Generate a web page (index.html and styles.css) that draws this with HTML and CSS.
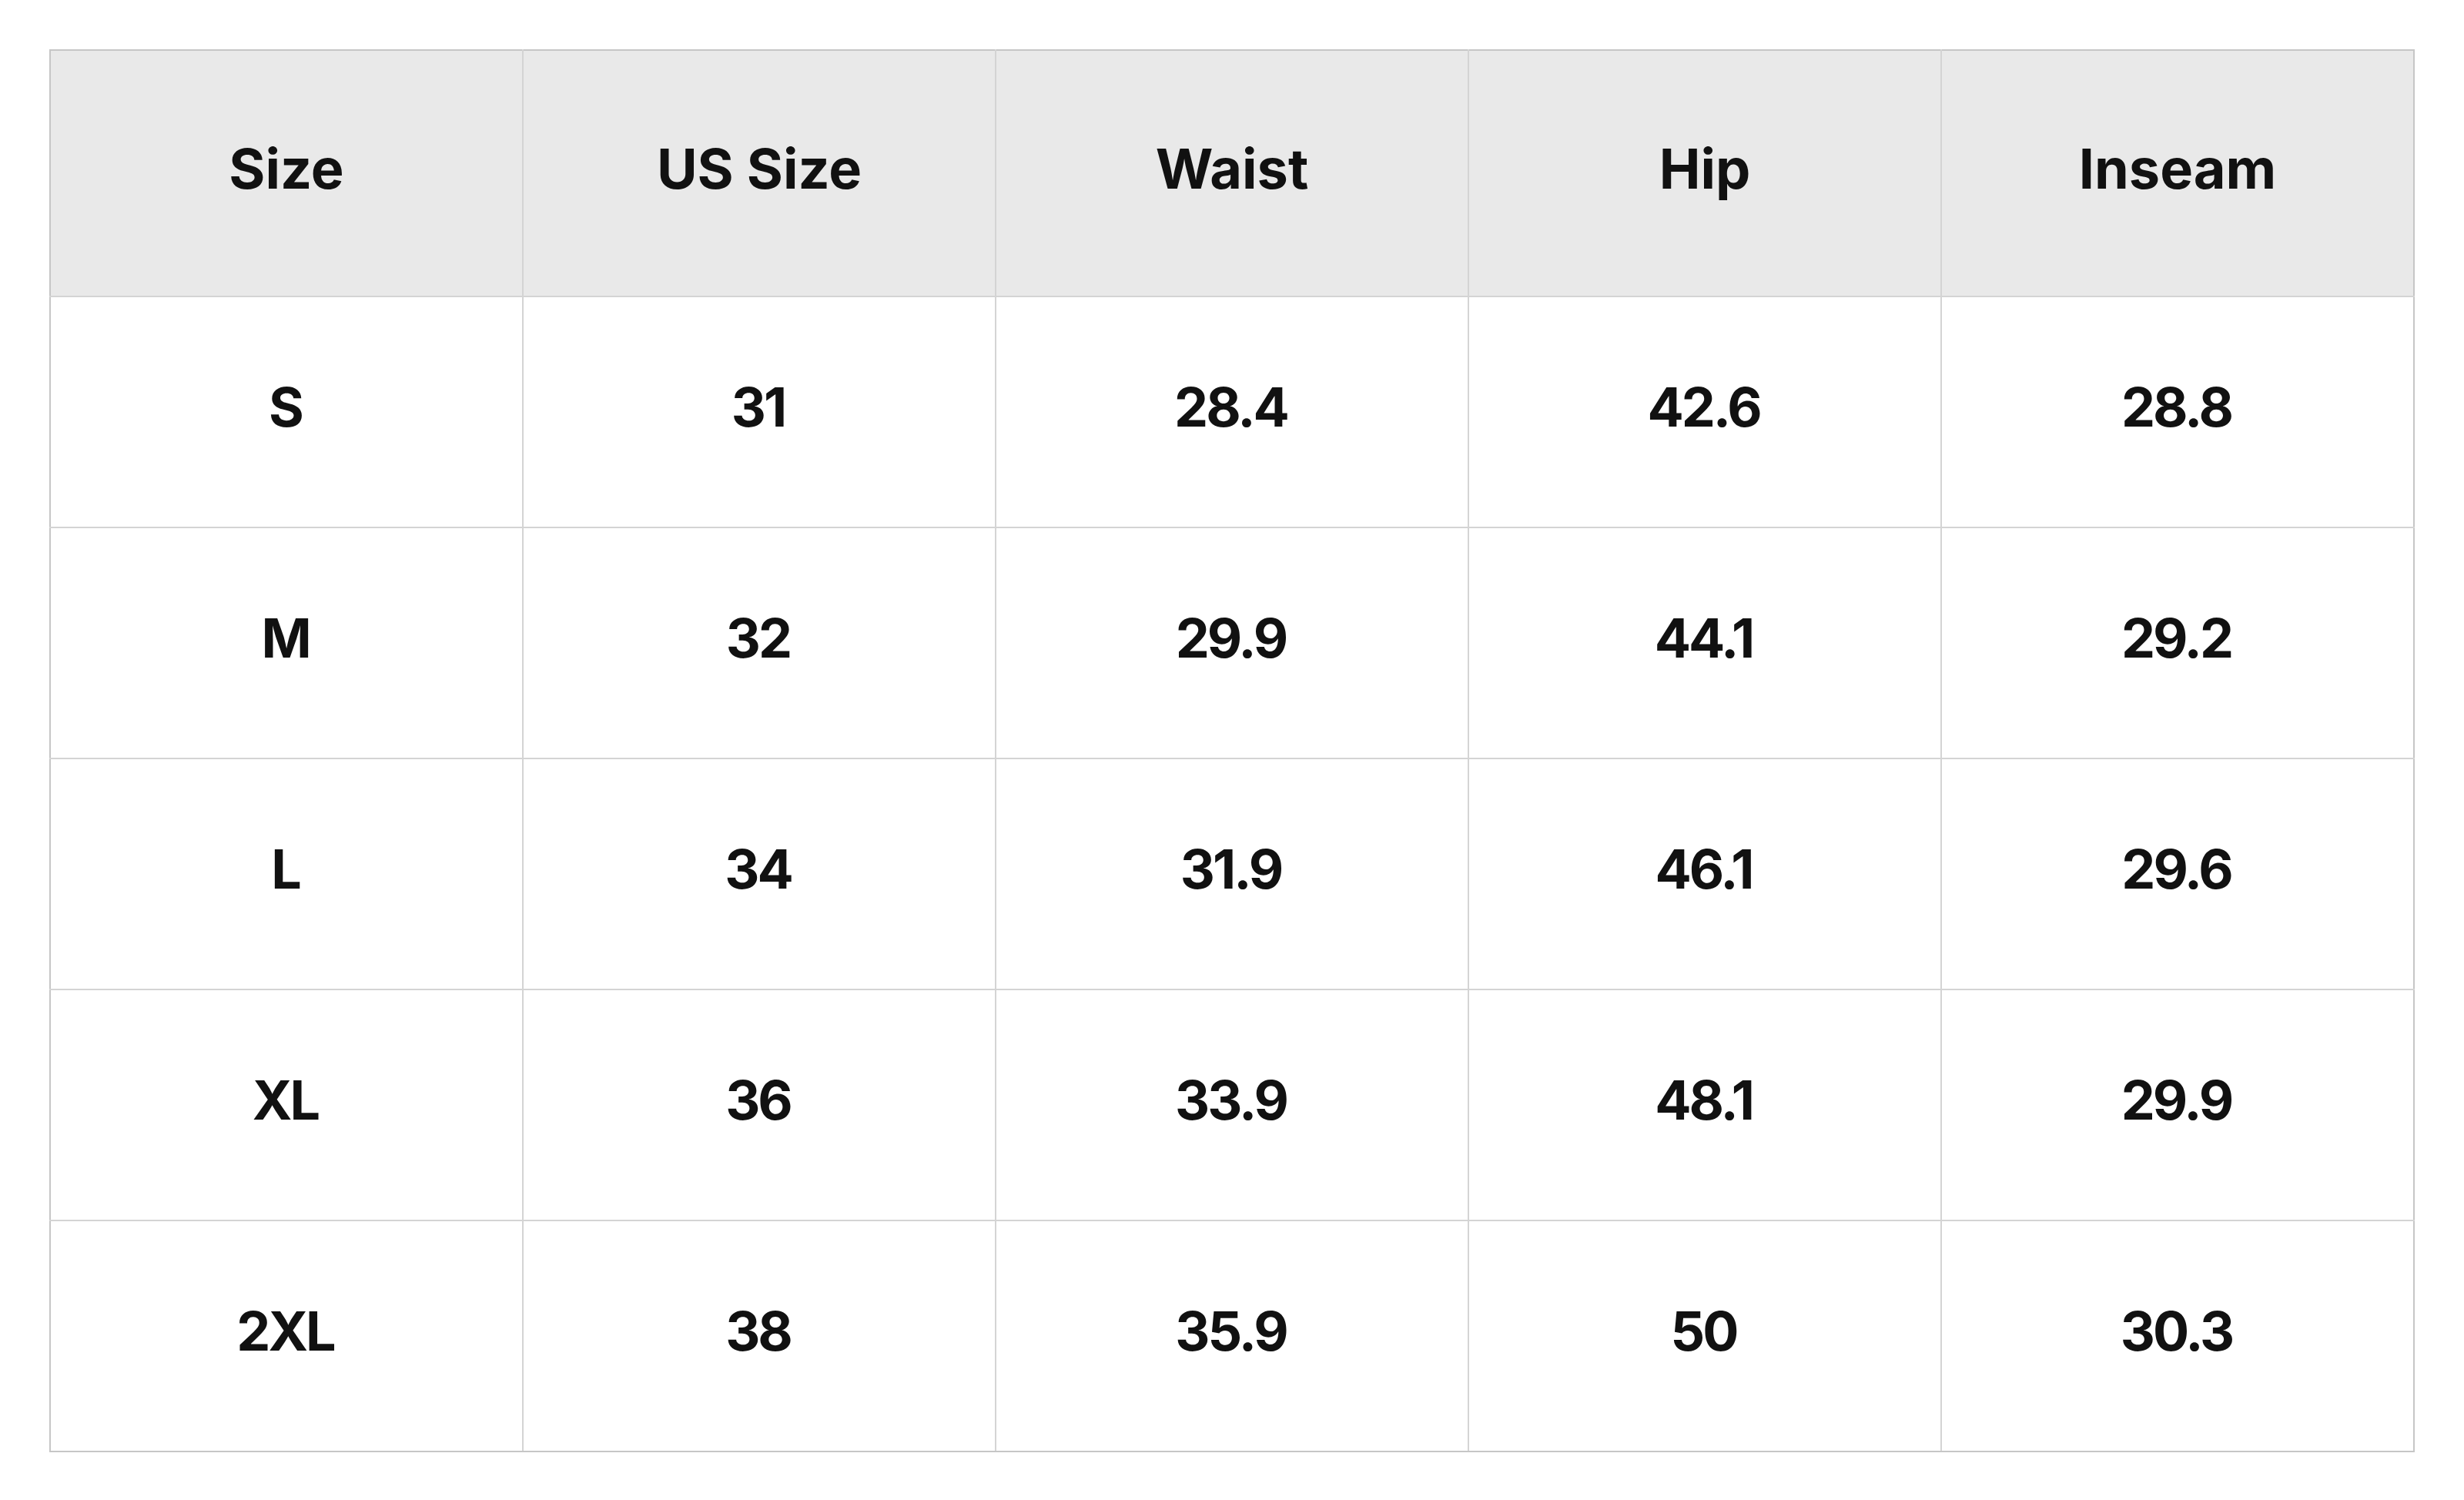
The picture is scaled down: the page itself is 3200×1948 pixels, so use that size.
FILE: index.html
```html
<!DOCTYPE html>
<html lang="en">
<head>
<meta charset="utf-8">
<title>Size Chart</title>
<link rel="stylesheet" href="styles.css">
</head>
<body>
<table class="size-chart">
  <thead>
    <tr class="head-row">
      <th>Size</th><th>US Size</th><th>Waist</th><th>Hip</th><th>Inseam</th>
    </tr>
  </thead>
  <tbody>
    <tr><td>S</td><td>31</td><td>28.4</td><td>42.6</td><td>28.8</td></tr>
    <tr><td>M</td><td>32</td><td>29.9</td><td>44.1</td><td>29.2</td></tr>
    <tr><td>L</td><td>34</td><td>31.9</td><td>46.1</td><td>29.6</td></tr>
    <tr><td>XL</td><td>36</td><td>33.9</td><td>48.1</td><td>29.9</td></tr>
    <tr><td>2XL</td><td>38</td><td>35.9</td><td>50</td><td>30.3</td></tr>
  </tbody>
</table>
</body>
</html>
```
FILE: styles.css
```css
html, body {
  margin: 0;
  padding: 0;
  background: #ffffff;
}
body {
  padding: 64px;
  font-family: Inter, "Liberation Sans", sans-serif;
  color: #111111;
}
.size-chart {
  border-collapse: collapse;
  table-layout: fixed;
  width: 3072px;
  border: 2px solid #c6c6c6;
}
.size-chart th,
.size-chart td {
  border: 2px solid #d4d4d4;
  padding: 0;
  text-align: center;
  vertical-align: middle;
  font-size: 72px;
  font-weight: 700;
  line-height: 1;
  padding-bottom: 12px;
  box-sizing: border-box;
}
.size-chart th {
  background: #e9e9e9;
  height: 320px;
}
.size-chart td {
  height: 300px;
  font-size: 70px;
  letter-spacing: -3px;
  text-indent: -3px;
}
.size-chart tr > :first-child { border-left-color: #c6c6c6; }
.size-chart tr > :last-child { border-right-color: #c6c6c6; }
.size-chart thead th { border-top-color: #c6c6c6; }
.size-chart tbody tr:last-child td { border-bottom-color: #c6c6c6; }
```
